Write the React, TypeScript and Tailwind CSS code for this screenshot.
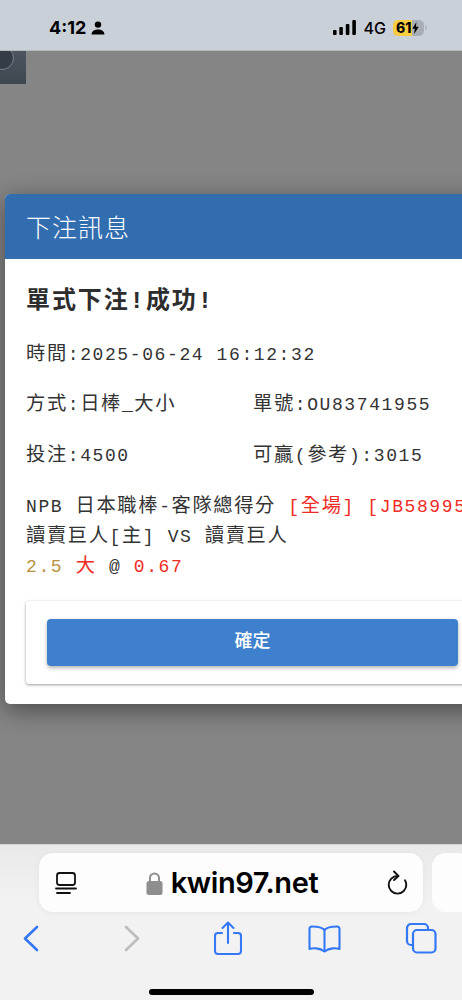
import React from 'react';

const mono = 'font-["Liberation_Mono","Noto_Sans_CJK_TC",monospace]';

// the CJK glyphs sit a bit larger than the latin ones in this page
function Zh({ children }: { children: React.ReactNode }) {
  return <span className="text-[19.3px]">{children}</span>;
}

function StatusBar() {
  return (
    <div className="h-[51px] shrink-0 bg-[#c9d0d8] border-b border-[#b4b9bf] flex items-center pl-[49px] pr-[35px] pt-[5px] font-['Inter',sans-serif] text-black">
      <span className="text-[18px] font-bold leading-none">4:12</span>
      <svg width="14" height="14" viewBox="0 0 14 14" className="ml-[5px]" fill="currentColor">
        <circle cx="7" cy="3.6" r="3.2" />
        <path d="M0.6 13.4c0-3.4 2.8-5 6.4-5s6.4 1.6 6.4 5z" />
      </svg>
      <div className="flex-1" />
      <svg width="23" height="15" viewBox="0 0 23 15" fill="currentColor">
        <rect x="0" y="10" width="3.600" height="5" rx="1" />
        <rect x="6.300" y="7" width="3.600" height="8" rx="1" />
        <rect x="12.800" y="4" width="3.600" height="11" rx="1" />
        <rect x="19.300" y="0" width="3.600" height="15" rx="1" />
      </svg>
      <span className="ml-[8px] text-[16px] font-medium leading-none">4G</span>
      <div className="ml-[7px] relative h-[16px] w-[31px] rounded-[5px] bg-[#a9aeb6] overflow-hidden flex items-center">
        <div className="absolute left-0 top-0 bottom-0 w-[19px] bg-[#f9cd42]" />
        <span className="relative ml-[3px] text-[14px] font-extrabold leading-none">61</span>
        <svg width="7" height="12" viewBox="0 0 7 12" fill="currentColor" className="relative ml-[1px]">
          <path d="M4.4 0 0.3 6.8h2.5L2.2 12l4.5-7.2H4z" />
        </svg>
      </div>
      <div className="ml-[1px] h-[5px] w-[2px] rounded-r bg-[#b4b9c0]" />
    </div>
  );
}

function Modal() {
  return (
    <div className={`ml-[5px] w-[520px] rounded-[5px] overflow-hidden bg-white shadow-[0_6px_24px_rgba(0,0,0,0.45)] text-[#333] ${mono}`}>
      <div className="h-[65px] bg-[#326db0] flex items-center pl-[21px] font-['Noto_Sans_CJK_TC',sans-serif] text-[25px] font-light text-white tracking-[1px]">
        下注訊息
      </div>
      <div className="pl-[21px] pt-[25px] pr-[4px] pb-[20px] text-[18px] tracking-[1.6px] leading-[30px]">
        <div className="text-[24px] font-semibold leading-[36px] tracking-[1.9px] text-[#2d2d2d]">單式下注!成功!</div>
        <div className="mt-[20px]"><Zh>時間</Zh>:2025-06-24 16:12:32</div>
        <div className="mt-[20px] flex">
          <span className="w-[227px]"><Zh>方式</Zh>:<Zh>日棒</Zh>_<Zh>大小</Zh></span>
          <span><Zh>單號</Zh>:OU83741955</span>
        </div>
        <div className="mt-[21px] flex">
          <span className="w-[227px]"><Zh>投注</Zh>:4500</span>
          <span><Zh>可贏</Zh>(<Zh>參考</Zh>):3015</span>
        </div>
        <div className="mt-[21px] whitespace-nowrap">
          NPB <Zh>日本職棒</Zh>-<Zh>客隊總得分</Zh> <span className="text-[#ee2c24]">[<Zh>全場</Zh>] [JB58995]</span>
        </div>
        <div><Zh>讀賣巨人</Zh>[<Zh>主</Zh>] VS <Zh>讀賣巨人</Zh></div>
        <div>
          <span className="text-[#b8923f]">2.5</span> <span className="text-[#ee2c24]"><Zh>大</Zh></span> @ <span className="text-[#ee2c24]">0.67</span>
        </div>
        <div className="mt-[19px] w-[600px] rounded-[3px] bg-white shadow-[0_1px_3px_rgba(0,0,0,0.4)] pt-[18px] pb-[18px] pl-[21px]">
          <button className="block w-[411px] h-[47px] pb-[7px] rounded-[4px] bg-[#3f80ce] shadow-[0_2px_4px_rgba(0,0,0,0.3)] text-white font-['Noto_Sans_CJK_TC',sans-serif] text-[18px] font-medium tracking-normal leading-none">
            確定
          </button>
        </div>
      </div>
    </div>
  );
}

function SafariBar() {
  return (
    <div className="h-[156px] shrink-0 bg-[#f2f2f2] border-t border-[#d6d6d6] overflow-hidden">
      <div className="h-[60px] pt-[8px] flex gap-[9px] pl-[39px] bg-gradient-to-b from-[#e9e9e9] to-[#f2f2f2]">
        <div className="w-[384px] h-[59px] shrink-0 rounded-[14px] bg-[#fdfdfd] shadow-[0_1px_6px_rgba(0,0,0,0.05)] flex items-center pl-[16px] pr-[15px]">
          <svg width="22" height="24" viewBox="0 0 22 24" fill="none" stroke="#111" strokeWidth="1.8" strokeLinecap="round">
            <rect x="2" y="2" width="18" height="12" rx="2.500" />
            <path d="M1 17.500h20M2 22h13" />
          </svg>
          <div className="flex-1 flex items-center justify-center">
            <svg width="17" height="24" viewBox="0 0 17 24" fill="none">
              <path d="M4 11V7a4.500 4.500 0 0 1 9 0v4" stroke="#8e8e8e" strokeWidth="2" />
              <rect x="0.500" y="10" width="16" height="14" rx="2.500" fill="#8e8e8e" />
            </svg>
            <span className="ml-[8px] font-['Inter',sans-serif] text-[29px] font-semibold leading-none text-black tracking-[-0.4px]">kwin97.net</span>
          </div>
          <svg width="21" height="25" viewBox="0 0 21 25" fill="none" stroke="#111" strokeWidth="1.9" strokeLinecap="round" strokeLinejoin="round">
            <path d="M10.500 6A8.800 8.800 0 1 0 19.300 14.800a8.800 8.800 0 0 0-1.300-4.600" />
            <path d="M7 1.500 11.500 6 7 10" />
          </svg>
        </div>
        <div className="w-[40px] h-[59px] shrink-0 rounded-[14px] bg-[#fdfdfd]" />
      </div>
      <div className="relative h-[96px]">
        <div className="flex items-start pl-[23px] pt-[20px]">
          <svg width="16" height="27" viewBox="0 0 16 27" fill="none" stroke="#3478f6" strokeWidth="2.6" strokeLinecap="round" strokeLinejoin="round">
            <path d="M14 2 2 13.500 14 25" />
          </svg>
          <svg width="16" height="27" viewBox="0 0 16 27" fill="none" stroke="#bdbdbd" strokeWidth="2.6" strokeLinecap="round" strokeLinejoin="round" className="ml-[85px]">
            <path d="M2 2l12 11.500L2 25" />
          </svg>
          <svg width="28" height="34" viewBox="0 0 28 34" fill="none" stroke="#3478f6" strokeWidth="2.1" strokeLinecap="round" strokeLinejoin="round" className="ml-[74px] -mt-[4px]">
            <path d="M8 12H4a3 3 0 0 0-3 3v15a3 3 0 0 0 3 3h20a3 3 0 0 0 3-3V15a3 3 0 0 0-3-3h-4" />
            <path d="M14 22V1.500M8.500 7 14 1.500 19.500 7" />
          </svg>
          <svg width="33" height="28" viewBox="0 0 33 28" fill="none" stroke="#3478f6" strokeWidth="2.1" strokeLinecap="round" strokeLinejoin="round" className="ml-[66px]">
            <path d="M16.500 5C14 2 10 1.500 4 1.500 2.500 1.500 1.500 2.500 1.500 4v20c3-1 10-1.500 15 2.500 5-4 12-3.500 15-2.500V4c0-1.500-1-2.500-2.500-2.500-6 0-10 .5-12.500 3.500z" />
            <path d="M16.500 5v21" />
          </svg>
          <svg width="32" height="32" viewBox="0 0 32 32" fill="none" stroke="#3478f6" strokeWidth="2.2" strokeLinejoin="round" className="ml-[64px] -mt-[3px]">
            <rect x="8" y="8" width="22.500" height="22.500" rx="4" />
            <path d="M8 23H6a4 4 0 0 1-4-4V6a4 4 0 0 1 4-4h13a4 4 0 0 1 4 4v2" />
          </svg>
        </div>
        <div className="absolute left-[149px] top-[84px] h-[6px] w-[165px] rounded-full bg-black" />
      </div>
    </div>
  );
}

export default function App() {
  return (
    <div className="w-[462px] h-[1000px] flex flex-col overflow-hidden">
      <StatusBar />
      <div className="flex-1 min-h-0 bg-[#858585] overflow-hidden">
        {/* page behind the dim layer */}
        <div className="h-[33px] w-[26px] bg-gradient-to-b from-[#4d5660] to-[#3e4650] overflow-hidden">
          <div className="-ml-[10px] mt-[-5px] w-[24px] h-[24px] rounded-full bg-[#333c47] border border-[#7c8187]" />
        </div>
        <div className="pt-[110px]">
          <Modal />
        </div>
      </div>
      <SafariBar />
    </div>
  );
}
